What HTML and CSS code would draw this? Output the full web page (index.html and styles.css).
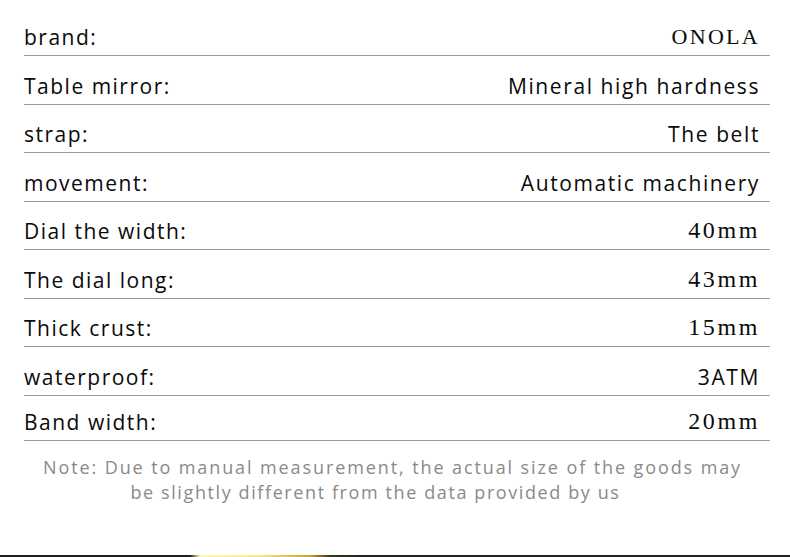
FILE: index.html
```html
<!DOCTYPE html>
<html>
<head>
<meta charset="utf-8">
<link rel="stylesheet" href="styles.css">
</head>
<body>
<div class="page">
  <div class="specs">
    <div class="row"><span class="label">brand:</span><span class="value serif caps">ONOLA</span></div>
    <div class="row"><span class="label">Table mirror:</span><span class="value">Mineral high hardness</span></div>
    <div class="row"><span class="label">strap:</span><span class="value">The belt</span></div>
    <div class="row"><span class="label">movement:</span><span class="value">Automatic machinery</span></div>
    <div class="row"><span class="label">Dial the width:</span><span class="value serif">40mm</span></div>
    <div class="row"><span class="label">The dial long:</span><span class="value serif">43mm</span></div>
    <div class="row"><span class="label">Thick crust:</span><span class="value serif">15mm</span></div>
    <div class="row"><span class="label">waterproof:</span><span class="value">3ATM</span></div>
    <div class="row last"><span class="label">Band width:</span><span class="value serif">20mm</span></div>
  </div>
  <p class="note"><span class="note-line1">Note: Due to manual measurement, the actual size of the goods may</span><span class="note-line2">be slightly different from the data provided by us</span></p>
  <div class="footer-bar"></div>
</div>
</body>
</html>
```
FILE: styles.css
```css
* { box-sizing: border-box; }
html, body { margin: 0; padding: 0; background: #ffffff; }
.page {
  width: 790px;
  height: 557px;
  display: flex;
  flex-direction: column;
  font-family: "Open Sans", "Noto Sans", sans-serif;
}
.specs {
  padding: 7.5px 20px 0 24px;
}
.row {
  height: 48.5px;
  display: flex;
  justify-content: space-between;
  align-items: flex-end;
  padding: 0 10px 7px 0;
  border-bottom: 1px solid #9a9a9a;
}
.row.last { height: 45px; }
.label {
  font-size: 21px;
  font-weight: 500;
  line-height: 1;
  letter-spacing: 1.5px;
  color: #0a0a0a;
}
.value {
  font-size: 21px;
  font-weight: 500;
  line-height: 1;
  letter-spacing: 1.6px;
  color: #0a0a0a;
}
.value.serif {
  font-family: "Liberation Serif", "DejaVu Serif", serif;
  font-weight: 400;
  font-size: 24px;
  letter-spacing: 2.6px;
}
.value.caps { font-size: 22px; letter-spacing: 2.3px; }
.note {
  margin: 14px 0 0 0;
  padding: 0 24px;
  color: #8a8a8a;
  font-size: 18px;
  font-weight: 500;
  line-height: 25px;
  display: flex;
  flex-direction: column;
  align-items: center;
}
.note-line1 { letter-spacing: 1.9px; padding-right: 5px; }
.note-line2 { letter-spacing: 1.6px; padding-right: 39px; }
.footer-bar {
  margin-top: auto;
  height: 2px;
  background: linear-gradient(to right, #1e1e1e 0, #1e1e1e 190px, #fff8b0 200px, #f4e98a 260px, #c9a52e 310px, #3a3424 330px, #222 360px, #222 100%);
}
```
